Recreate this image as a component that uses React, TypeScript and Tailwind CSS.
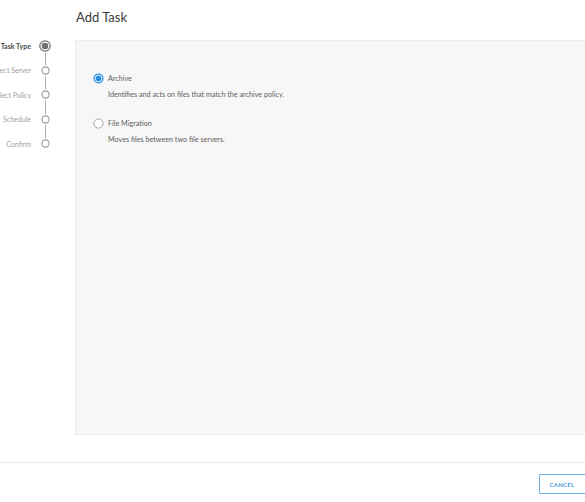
import React from 'react';

const steps = ['Task Type', 'Select Server', 'Select Policy', 'Schedule', 'Confirm'];

const options = [
  { label: 'Archive', desc: 'Identifies and acts on files that match the archive policy.', checked: true },
  { label: 'File Migration', desc: 'Moves files between two file servers.', checked: false },
];

function StepDot({ active }: { active: boolean }) {
  if (active) {
    return (
      <svg width="12" height="12" viewBox="0 0 12 12" className="shrink-0">
        <circle cx="6" cy="6" r="5.2" fill="#fff" stroke="#6f6f6f" strokeWidth="1.2" />
        <circle cx="6" cy="6" r="3.3" fill="#6f6f6f" />
      </svg>
    );
  }
  return (
    <svg width="9" height="9" viewBox="0 0 9 9" className="shrink-0">
      <circle cx="4.5" cy="4.5" r="3.6" fill="#fff" stroke="#9a9a9a" strokeWidth="1.1" />
    </svg>
  );
}

function Radio({ checked }: { checked: boolean }) {
  return checked ? (
    <svg width="11" height="11" viewBox="0 0 11 11" className="shrink-0">
      <circle cx="5.5" cy="5.5" r="5" fill="#2b8ee0" />
      <circle cx="5.5" cy="5.5" r="3.4" fill="none" stroke="#fff" strokeWidth="0.9" />
    </svg>
  ) : (
    <svg width="11" height="11" viewBox="0 0 11 11" className="shrink-0">
      <circle cx="5.5" cy="5.5" r="4.6" fill="#fff" stroke="#9a9a9a" strokeWidth="0.9" />
    </svg>
  );
}

export default function App() {
  return (
    <div className="flex h-[502px] w-full flex-col overflow-hidden bg-white" style={{ fontFamily: 'Lato, "Open Sans", sans-serif' }}>
      <div className="pl-[76px] pt-[9px] text-[13px] leading-[16px] text-[#3a3a3a]">Add Task</div>

      <div className="mt-[15px] flex h-[395px]">
        {/* stepper */}
        <div className="mt-[-6px] flex w-[75px] shrink-0 flex-col">
          {steps.map((s, i) => (
            <div key={s} className="flex h-[24.4px] items-stretch">
              <div className="flex w-[33px] items-center justify-end whitespace-nowrap pr-[2px]">
                <span className={i === 0 ? 'text-[7px] font-bold text-[#4a4a4a]' : 'text-[7px] text-[#a0a0a0]'}>{s}</span>
              </div>
              <div className="flex w-[24px] flex-col items-center">
                <div className={`w-px flex-1 ${i === 0 ? 'bg-transparent' : 'bg-[#aaa]'} mb-[1px]`} />
                <StepDot active={i === 0} />
                <div className={`w-px flex-1 ${i === steps.length - 1 ? 'bg-transparent' : 'bg-[#aaa]'} mt-[1px]`} />
              </div>
            </div>
          ))}
        </div>

        {/* panel */}
        <div className="mr-[-6px] flex-1 border border-[#ececec] bg-[#f7f7f7] pl-[17px] pt-[32px]">
          {options.map((o) => (
            <div key={o.label} className="mb-[19px]">
              <div className="flex items-center gap-[4px]">
                <Radio checked={o.checked} />
                <span className="text-[7.2px] leading-[10px] text-[#606060]">{o.label}</span>
              </div>
              <div className="mt-[6px] pl-[15px] text-[7.2px] leading-[9px] text-[#606060]">{o.desc}</div>
            </div>
          ))}
        </div>
      </div>

      <div className="mt-[27px] border-t border-[#e8e8e8]" />

      <div className="flex justify-end pt-[11px] pr-0">
        <button className="mr-[-6px] h-[20px] w-[52px] border border-[#73b3e6] bg-white pr-[6px] text-[6px] font-bold tracking-[0.3px] text-[#4a9ee0]">
          CANCEL
        </button>
      </div>
    </div>
  );
}
